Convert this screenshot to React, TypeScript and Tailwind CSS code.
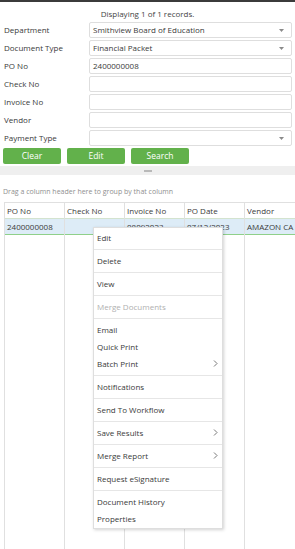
import React from "react";

const fields: { label: string; value: string; select?: boolean }[] = [
  { label: "Department", value: "Smithview Board of Education", select: true },
  { label: "Document Type", value: "Financial Packet", select: true },
  { label: "PO No", value: "2400000008" },
  { label: "Check No", value: "" },
  { label: "Invoice No", value: "" },
  { label: "Vendor", value: "" },
  { label: "Payment Type", value: "", select: true },
];

const columns = ["PO No", "Check No", "Invoice No", "PO Date", "Vendor"];
const row = ["2400000008", "", "08092023", "07/12/2023", "AMAZON CA"];

type MenuEntry = { label: string; disabled?: boolean; sub?: boolean; sep?: boolean };

const menu: MenuEntry[] = [
  { label: "Edit", sep: true },
  { label: "Delete", sep: true },
  { label: "View", sep: true },
  { label: "Merge Documents", disabled: true, sep: true },
  { label: "Email" },
  { label: "Quick Print" },
  { label: "Batch Print", sub: true, sep: true },
  { label: "Notifications", sep: true },
  { label: "Send To Workflow", sep: true },
  { label: "Save Results", sub: true, sep: true },
  { label: "Merge Report", sub: true, sep: true },
  { label: "Request eSignature", sep: true },
  { label: "Document History" },
  { label: "Properties" },
];

function Caret() {
  return (
    <svg width="5" height="3" viewBox="0 0 5 3" className="shrink-0">
      <path d="M0 0 L5 0 L2.5 3 Z" fill="#8a8a8a" />
    </svg>
  );
}

function Chevron() {
  return (
    <svg width="5" height="7" viewBox="0 0 5 7" className="shrink-0">
      <path d="M1 0.5 L4 3.5 L1 6.5" fill="none" stroke="#555" strokeWidth="0.8" />
    </svg>
  );
}

export default function App() {
  return (
    <div
      className="relative w-[295px] h-[549px] overflow-hidden bg-white text-[#3a3a3a]"
      style={{ fontFamily: '"Open Sans", "Noto Sans", sans-serif' }}
    >
      <div className="h-[2px] bg-[#3b3b3b]" />

      <div className="pt-[6px] h-[20px] text-center text-[8px] leading-[11px] text-[#444]">
        Displaying 1 of 1 records.
      </div>

      <div className="flex flex-col gap-[2px] px-[3px]">
        {fields.map((f) => (
          <div key={f.label} className="flex items-center h-[16px]">
            <div className="w-[86px] pl-[1px] text-[8px] leading-none text-[#3a3a3a]">{f.label}</div>
            <div className="flex-1 h-[16px] flex items-center justify-between border border-[#dedede] rounded-[2px] px-[3px] text-[8px] text-[#3a3a3a]">
              <span>{f.value}</span>
              {f.select && <span className="pr-[4px]"><Caret /></span>}
            </div>
          </div>
        ))}
        <div className="flex gap-[6px] h-[16px]">
          {["Clear", "Edit", "Search"].map((b) => (
            <button
              key={b}
              className="w-[58px] h-[16px] rounded-[2px] bg-[#62b14b] text-white text-[8.5px] leading-none"
            >
              {b}
            </button>
          ))}
        </div>
      </div>

      <div className="mt-[2px] h-[9px] bg-[#efefef] flex items-center justify-center">
        <div className="w-[8px] h-[2px] bg-[#b9b9b9]" />
      </div>

      <div className="h-[27px] pl-[3px] pt-[13px] text-[7px] leading-none text-[#8f8f8f]">
        Drag a column header here to group by that column
      </div>

      <div className="ml-[4px] flex h-[400px] border-t border-l border-[#e0e0e0]">
        {columns.map((c, i) => (
          <div key={c} className="w-[60px] shrink-0 border-r border-[#e0e0e0] flex flex-col">
            <div className="h-[16px] flex items-center px-[2px] text-[8px] text-[#3a3a3a] border-b border-[#d3e3cf] whitespace-nowrap overflow-hidden">
              {c}
            </div>
            <div className="h-[16px] flex items-center px-[2px] bg-[#ddecf7] text-[8px] text-[#3a3a3a] border-b border-[#8fd08a] whitespace-nowrap overflow-hidden">
              {row[i]}
            </div>
          </div>
        ))}
      </div>

      <div className="absolute left-[93px] top-[227px] w-[130px] bg-white border border-[#dedede] shadow-[1px_1px_3px_rgba(0,0,0,0.18)] pt-[1px] pb-[1px]">
        {menu.map((m) => (
          <div key={m.label}>
            <div
              className={`h-[17px] flex items-center justify-between pl-[3px] pr-[4px] text-[8px] ${
                m.disabled ? "text-[#b0b0b0]" : "text-[#3a3a3a]"
              }`}
            >
              <span>{m.label}</span>
              {m.sub && <Chevron />}
            </div>
            {m.sep && <div className="mt-[3px] mb-[2px] h-px bg-[#e6e6e6]" />}
          </div>
        ))}
      </div>
    </div>
  );
}
